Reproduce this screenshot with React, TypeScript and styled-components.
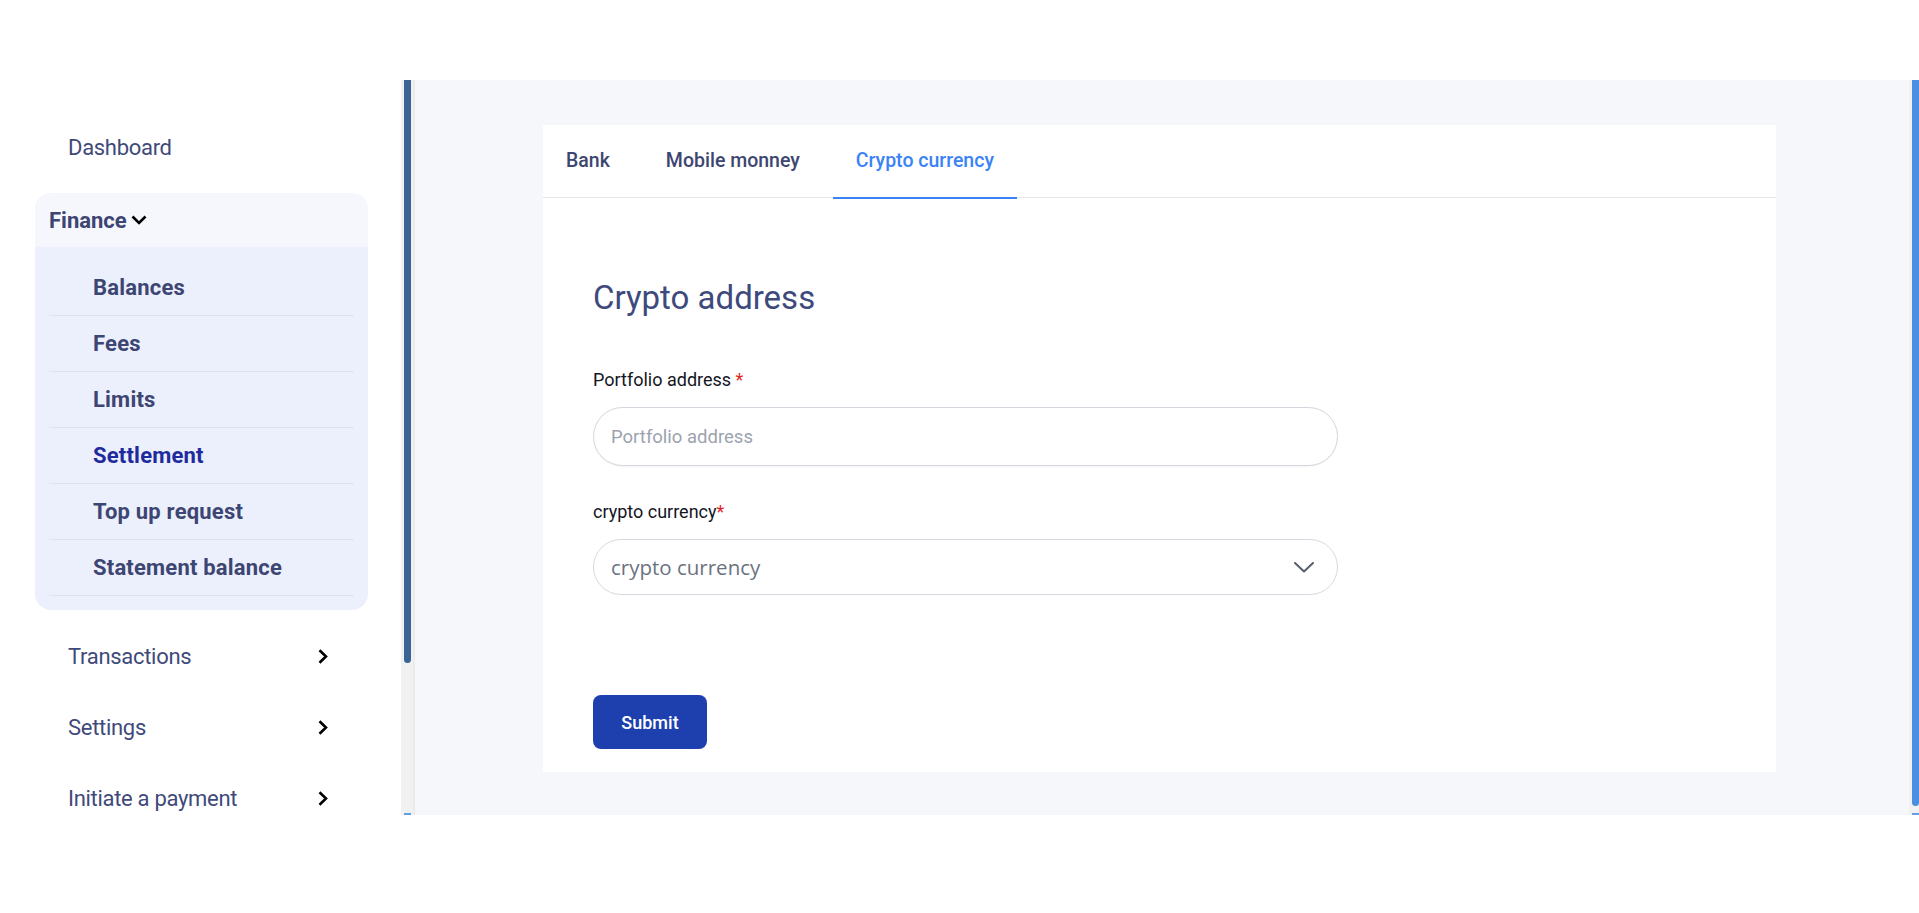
import React from "react";
import styled, { createGlobalStyle } from "styled-components";

const GlobalStyle = createGlobalStyle`
  html, body { margin: 0; padding: 0; background: #ffffff; }
  body { font-family: Roboto, "Noto Sans", Arial, sans-serif; }
  * { box-sizing: border-box; }
`;

const Page = styled.div`
  display: flex;
  flex-direction: column;
  width: 100%;
`;

const TopBar = styled.header`
  height: 80px;
  background: #ffffff;
`;

const Frame = styled.div`
  display: flex;
  height: 735px;
`;

const SidebarPane = styled.div`
  width: 415px;
  flex-shrink: 0;
  display: flex;
  border-right: 2px solid #ebebeb;
  background: #ffffff;
`;

const SidebarContent = styled.aside`
  flex: 1;
  overflow: hidden;
  padding-top: 32px;
`;

const ScrollTrack = styled.div<{ $width: number; $right: number }>`
  width: ${(p) => p.$width}px;
  flex-shrink: 0;
  display: flex;
  flex-direction: column;
  justify-content: space-between;
  padding: 0 ${(p) => p.$right}px 0 3px;
  background: #f1f1f1;
`;

const ScrollThumb = styled.div<{ $color: string; $length: number }>`
  height: ${(p) => p.$length}px;
  background: ${(p) => p.$color};
  border-radius: 0 0 4px 4px;
`;

const ScrollArrow = styled.div<{ $color: string }>`
  height: 2px;
  background: ${(p) => p.$color};
  opacity: 0.85;
`;

const NavRow = styled.div`
  height: 71px;
  display: flex;
  align-items: center;
  justify-content: space-between;
  padding: 0 73px 0 68px;
  font-size: 22px;
  letter-spacing: -0.3px;
  color: #3f4a7a;
  cursor: pointer;
`;

const FinanceGroup = styled.div`
  margin: 10px 33px 11px 35px;
  border-radius: 16px;
  overflow: hidden;
  background: #ecf0fc;
`;

const FinanceHeader = styled.div`
  height: 54px;
  display: flex;
  align-items: center;
  gap: 4px;
  padding-left: 14px;
  background: #f6f7fc;
  font-size: 22px;
  font-weight: 700;
  color: #3d4573;
`;

const SubList = styled.div`
  padding: 13px 14px 14px;
`;

const SubItem = styled.div<{ $active?: boolean }>`
  height: 56px;
  display: flex;
  align-items: center;
  padding-left: 44px;
  border-bottom: 1px solid #dfe2ec;
  font-size: 22px;
  font-weight: 700;
  letter-spacing: 0.2px;
  color: ${(p) => (p.$active ? "#1f2a9f" : "#3d4573")};
`;

const MainPane = styled.div`
  flex: 1;
  display: flex;
  min-width: 0;
`;

const MainContent = styled.main`
  flex: 1;
  overflow: hidden;
  background: #f6f7fb;
  padding: 45px 0 52px 128px;
`;

const Card = styled.section`
  width: 1233px;
  background: #ffffff;
`;

const TabBar = styled.nav`
  display: flex;
  gap: 10px;
  height: 73px;
  border-bottom: 1px solid #e5e7eb;
`;

const Tab = styled.div<{ $active?: boolean }>`
  height: 74px;
  margin-bottom: -1px;
  display: flex;
  align-items: center;
  padding: 0 23px 2px;
  font-size: 19.5px;
  font-weight: 500;
  color: ${(p) => (p.$active ? "#3b82f6" : "#3d4670")};
  border-bottom: 2px solid ${(p) => (p.$active ? "#3b82f6" : "transparent")};
  cursor: pointer;
`;

const Body = styled.div`
  padding: 80px 50px 23px;
  display: flex;
  flex-direction: column;
  align-items: flex-start;
`;

const Heading = styled.h2`
  margin: 0;
  font-size: 33px;
  line-height: 40px;
  font-weight: 400;
  color: #3e4a7c;
`;

const Label = styled.label<{ $gap: number }>`
  margin-top: ${(p) => p.$gap}px;
  font-size: 18px;
  line-height: 24px;
  color: #14161f;
`;

const Required = styled.span`
  color: #e02424;
`;

const TextInput = styled.input`
  margin-top: 15px;
  width: 745px;
  height: 59px;
  border: 1px solid #d3d6dc;
  border-radius: 30px;
  padding: 0 17px;
  font-family: Roboto, Arial, sans-serif;
  font-size: 18.5px;
  color: #111827;
  outline: none;
  background: #ffffff;
  box-shadow: 0 1px 1px rgba(0, 0, 0, 0.04);

  &::placeholder { color: #9ca3af; }
`;

const SelectBox = styled.div`
  margin-top: 15px;
  width: 745px;
  height: 56px;
  border: 1px solid #d6d9df;
  border-radius: 28px;
  display: flex;
  align-items: center;
  justify-content: space-between;
  padding: 0 23px 0 17px;
  background: #ffffff;
  cursor: pointer;
`;

const SelectPlaceholder = styled.span`
  font-family: "Open Sans", Arial, sans-serif;
  font-size: 20.5px;
  color: #6b7280;
`;

const SubmitButton = styled.button`
  margin-top: 100px;
  width: 114px;
  height: 54px;
  border: none;
  border-radius: 8px;
  background: #1e40af;
  color: #ffffff;
  font-family: Roboto, Arial, sans-serif;
  font-size: 18px;
  font-weight: 500;
  cursor: pointer;
`;

const ChevronRight = () => (
  <svg width="10" height="15" viewBox="0 0 10 15" fill="none">
    <path d="M1.5 1.2 L8 7.5 L1.5 13.8" stroke="#000" strokeWidth="2.6" strokeLinejoin="miter" />
  </svg>
);

const ChevronDownSmall = () => (
  <svg width="16" height="10" viewBox="0 0 16 10" fill="none">
    <path d="M1.5 1.5 L8 8 L14.5 1.5" stroke="#000" strokeWidth="2.6" />
  </svg>
);

const SelectChevron = () => (
  <svg width="20" height="11" viewBox="0 0 20 11" fill="none">
    <path d="M1 1 L10 9.5 L19 1" stroke="#565e6c" strokeWidth="2" strokeLinecap="round" strokeLinejoin="round" />
  </svg>
);

const subItems = ["Balances", "Fees", "Limits", "Settlement", "Top up request", "Statement balance"];

export default function App() {
  return (
    <Page>
      <GlobalStyle />
      <TopBar />
      <Frame>
        <SidebarPane>
          <SidebarContent>
            <NavRow>Dashboard</NavRow>
            <FinanceGroup>
              <FinanceHeader>
                Finance
                <ChevronDownSmall />
              </FinanceHeader>
              <SubList>
                {subItems.map((s) => (
                  <SubItem key={s} $active={s === "Settlement"}>
                    {s}
                  </SubItem>
                ))}
              </SubList>
            </FinanceGroup>
            <NavRow>
              Transactions
              <ChevronRight />
            </NavRow>
            <NavRow>
              Settings
              <ChevronRight />
            </NavRow>
            <NavRow>
              Initiate a payment
              <ChevronRight />
            </NavRow>
          </SidebarContent>
          <ScrollTrack $width={12} $right={2}>
            <ScrollThumb $color="#3a6494" $length={583} />
            <ScrollArrow $color="#4a90e2" />
          </ScrollTrack>
        </SidebarPane>
        <MainPane>
          <MainContent>
            <Card>
              <TabBar>
                <Tab>Bank</Tab>
                <Tab>Mobile monney</Tab>
                <Tab $active>Crypto currency</Tab>
              </TabBar>
              <Body>
                <Heading>Crypto address</Heading>
                <Label $gap={50}>
                  Portfolio address <Required>*</Required>
                </Label>
                <TextInput placeholder="Portfolio address" />
                <Label $gap={34}>
                  crypto currency<Required>*</Required>
                </Label>
                <SelectBox>
                  <SelectPlaceholder>crypto currency</SelectPlaceholder>
                  <SelectChevron />
                </SelectBox>
                <SubmitButton>Submit</SubmitButton>
              </Body>
            </Card>
          </MainContent>
          <ScrollTrack $width={10} $right={0}>
            <ScrollThumb $color="#4a90e2" $length={726} />
            <ScrollArrow $color="#4a90e2" />
          </ScrollTrack>
        </MainPane>
      </Frame>
    </Page>
  );
}
